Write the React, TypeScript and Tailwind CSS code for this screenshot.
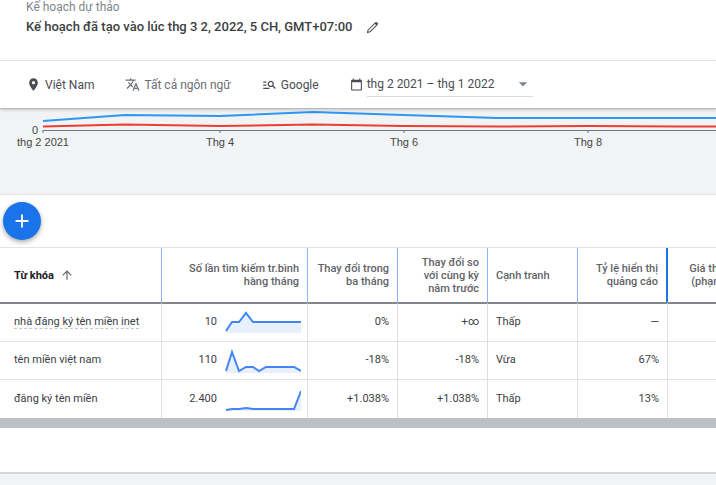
import type { FC, ReactNode } from "react";
import {
  MdAdd,
  MdArrowDropDown,
  MdArrowUpward,
  MdCalendarToday,
  MdLocationOn,
  MdManageSearch,
  MdTranslate,
} from "react-icons/md";

interface IKeyword {
  text: string;
  volume: string;
  trend: string;
  base: number;
  threeMonths: string;
  yearly: string;
  competition: string;
  impressionShare: string;
  suggested?: boolean;
}

interface IFilter {
  text: string;
  icon: ReactNode;
  className: string;
}

const keywords: IKeyword[] = [
  {
    text: "nhà đăng ký tên miền inet",
    volume: "10",
    trend: "1,20 7,11 14,11 21,2 28,11 76,11",
    base: 22,
    threeMonths: "0%",
    yearly: "+∞",
    competition: "Thấp",
    impressionShare: "—",
    suggested: true,
  },
  {
    text: "tên miền việt nam",
    volume: "110",
    trend: "1,22 7,3 14,22 21,18 28,18 34,22 41,18 69,18 76,22",
    base: 24,
    threeMonths: "-18%",
    yearly: "-18%",
    competition: "Vừa",
    impressionShare: "67%",
  },
  {
    text: "đăng ký tên miền",
    volume: "2.400",
    trend: "1,23 7,22 14,22 21,21 28,22 69,22 76,4",
    base: 24,
    threeMonths: "+1.038%",
    yearly: "+1.038%",
    competition: "Thấp",
    impressionShare: "13%",
  },
];

const filters: IFilter[] = [
  {
    text: "Việt Nam",
    icon: <MdLocationOn size={15} className="text-[#4a4d51]" />,
    className: "text-[#4a4d51]",
  },
  {
    text: "Tất cả ngôn ngữ",
    icon: <MdTranslate size={15} />,
    className: "text-[#6b6e73]",
  },
  {
    text: "Google",
    icon: <MdManageSearch size={15} />,
    className: "text-[#4a4d51]",
  },
];

const months = [
  { x: 43, label: "thg 2 2021" },
  { x: 220, label: "Thg 4" },
  { x: 404, label: "Thg 6" },
  { x: 588, label: "Thg 8" },
];

const headClass =
  "border-r border-[#8fb4f8] px-2 align-middle font-medium text-[#5f6368]";
const cellClass = "border-r border-r-[#e0e0e0] px-2";

const PencilIcon: FC = () => (
  <svg width="13" height="13" viewBox="0 0 14 14" fill="none" stroke="#4a4d51">
    <path d="M1.5 12.5 2.3 9.7 9.8 2.2 11.8 4.2 4.3 11.7Z" strokeWidth="1.1" strokeLinejoin="round" />
    <path d="M9.6 2.4 11 1 13 3 11.6 4.4Z" fill="#4a4d51" strokeWidth="0.6" />
  </svg>
);

const Sparkline: FC<{ points: string; base: number }> = ({ points, base }) => (
  <svg width="76" height="24" viewBox="0 0 76 24" className="shrink-0">
    <polygon points={`1,${base} ${points} 76,${base}`} fill="#e8f0fe" />
    <polyline points={points} fill="none" stroke="#4285f4" strokeWidth="2" />
  </svg>
);

const PlanHeader: FC = () => (
  <header className="h-[61px] border-b border-[#ececec] pl-[26px]">
    <p className="text-xs leading-[14px] text-[#80868b]">Kế hoạch dự thảo</p>
    <div className="mt-1 flex items-center gap-3.5">
      <h1 className="text-[13px] leading-[18px] font-medium text-[#3c4043]">
        Kế hoạch đã tạo vào lúc thg 3 2, 2022, 5 CH, GMT+07:00
      </h1>
      <button type="button" aria-label="Chỉnh sửa tên kế hoạch">
        <PencilIcon />
      </button>
    </div>
  </header>
);

const FilterBar: FC = () => (
  <div className="relative flex h-12 items-center gap-[31px] border-b border-[#b8babd] pl-[26px] text-xs shadow-[0_1px_3px_rgba(0,0,0,0.2)]">
    {filters.map((filter) => (
      <button
        key={filter.text}
        type="button"
        className={`flex items-center gap-1 ${filter.className}`}
      >
        {filter.icon}
        {filter.text}
      </button>
    ))}
    <div className="flex items-center gap-1 text-[#4a4d51]">
      <MdCalendarToday size={13} />
      <button
        type="button"
        className="flex h-6 w-[166px] items-center justify-between border-b border-[#dadce0]"
      >
        thg 2 2021 – thg 1 2022
        <MdArrowDropDown size={20} className="text-[#80868b]" />
      </button>
    </div>
  </div>
);

const VolumeChart: FC = () => (
  <section className="h-[86px] overflow-hidden border-b border-[#e3e4e6] bg-[#f1f3f4]">
    <svg
      width="1140"
      height="50"
      viewBox="0 0 1140 50"
      className="max-w-none font-['Liberation_Sans',Arial,sans-serif]"
    >
      <path d="M43 21.5H1140" stroke="#757575" />
      {months.map((month) => (
        <g key={month.label}>
          <path d={`M${month.x} 21v3`} stroke="#757575" />
          <text x={month.x} y="37" textAnchor="middle" fontSize="11" fill="#444746">
            {month.label}
          </text>
        </g>
      ))}
      <text x="38" y="25" textAnchor="end" fontSize="11" fill="#444746">
        0
      </text>
      <polyline
        points="43,12 125,6 220,7 313,3 404,6 497,9 588,9 1140,9"
        fill="none"
        stroke="#2e96f3"
        strokeWidth="2"
      />
      <polyline
        points="43,17.5 125,15.5 220,17 313,15.5 404,17 497,17.5 588,17 680,17.5 1140,17.5"
        fill="none"
        stroke="#ea3f33"
        strokeWidth="2"
      />
    </svg>
  </section>
);

const KeywordTable: FC = () => (
  <div className="overflow-hidden">
    <table className="w-full min-w-[800px] table-fixed border-separate border-spacing-0 border-t border-[#e3e4e6] text-[11px] text-[#3c4043]">
      <colgroup>
        <col className="w-[162px]" />
        <col className="w-[146px]" />
        <col className="w-[90px]" />
        <col className="w-[90px]" />
        <col className="w-[90px]" />
        <col className="w-[90px]" />
        <col />
      </colgroup>
      <thead>
        <tr className="h-[54px] text-right leading-[13px]">
          <th className="border-r border-[#8fb4f8] pl-[14px] text-left font-bold text-[#202124]">
            <button type="button" className="flex items-center gap-1.5">
              Từ khóa
              <MdArrowUpward size={14} className="text-[#5f6368]" />
            </button>
          </th>
          <th className={headClass}>
            Số lần tìm kiếm tr.bình
            <br />
            hàng tháng
          </th>
          <th className={headClass}>
            Thay đổi trong
            <br />
            ba tháng
          </th>
          <th className={headClass}>
            Thay đổi so với cùng kỳ năm trước
          </th>
          <th className={`${headClass} text-left`}>Cạnh tranh</th>
          <th className="border-r-2 border-[#1a73e8] px-2 font-medium text-[#5f6368]">
            Tỷ lệ hiển thị quảng cáo
          </th>
          <th className="px-5 font-medium whitespace-nowrap text-[#5f6368]">
            Giá thầu đầu trang
            <br />
            (phạm vi giá thấp)
          </th>
        </tr>
      </thead>
      <tbody>
        {keywords.map((keyword) => (
          <tr
            key={keyword.text}
            className="h-[38px] text-right *:border-b *:border-b-[#e0e0e0] first:h-10 first:*:border-t-2 first:*:border-t-[#80868b] last:*:border-b-0"
          >
            <td className="border-r border-r-[#e0e0e0] pl-[14px] text-left whitespace-nowrap">
              <span
                className={
                  keyword.suggested ? "border-b border-dashed border-[#c4c7c9]" : ""
                }
              >
                {keyword.text}
              </span>
            </td>
            <td className="border-r border-r-[#e0e0e0] pr-[6px]">
              <div className="flex items-center justify-end gap-2">
                {keyword.volume}
                <Sparkline points={keyword.trend} base={keyword.base} />
              </div>
            </td>
            <td className={cellClass}>{keyword.threeMonths}</td>
            <td className={cellClass}>{keyword.yearly}</td>
            <td className={`${cellClass} text-left`}>{keyword.competition}</td>
            <td className={cellClass}>{keyword.impressionShare}</td>
            <td />
          </tr>
        ))}
      </tbody>
    </table>
  </div>
);

const App: FC = () => (
  <main className="min-h-screen overflow-hidden bg-[#f1f3f4] font-['Roboto','Noto_Sans',sans-serif]">
    <div className="bg-white">
      <PlanHeader />
      <FilterBar />
      <VolumeChart />
      <div className="flex h-[52px] items-center pl-[3px]">
        <button
          type="button"
          aria-label="Thêm từ khóa"
          className="flex size-[38px] items-center justify-center rounded-full bg-[#1a73e8] text-white shadow-[0_2px_5px_rgba(0,0,0,0.35)]"
        >
          <MdAdd size={22} />
        </button>
      </div>
      <KeywordTable />
      <div className="h-[10px] bg-[#bdc1c6]" />
      <div className="h-[46px] border-b-2 border-[#d5d6d8]" />
    </div>
  </main>
);

export default App;
